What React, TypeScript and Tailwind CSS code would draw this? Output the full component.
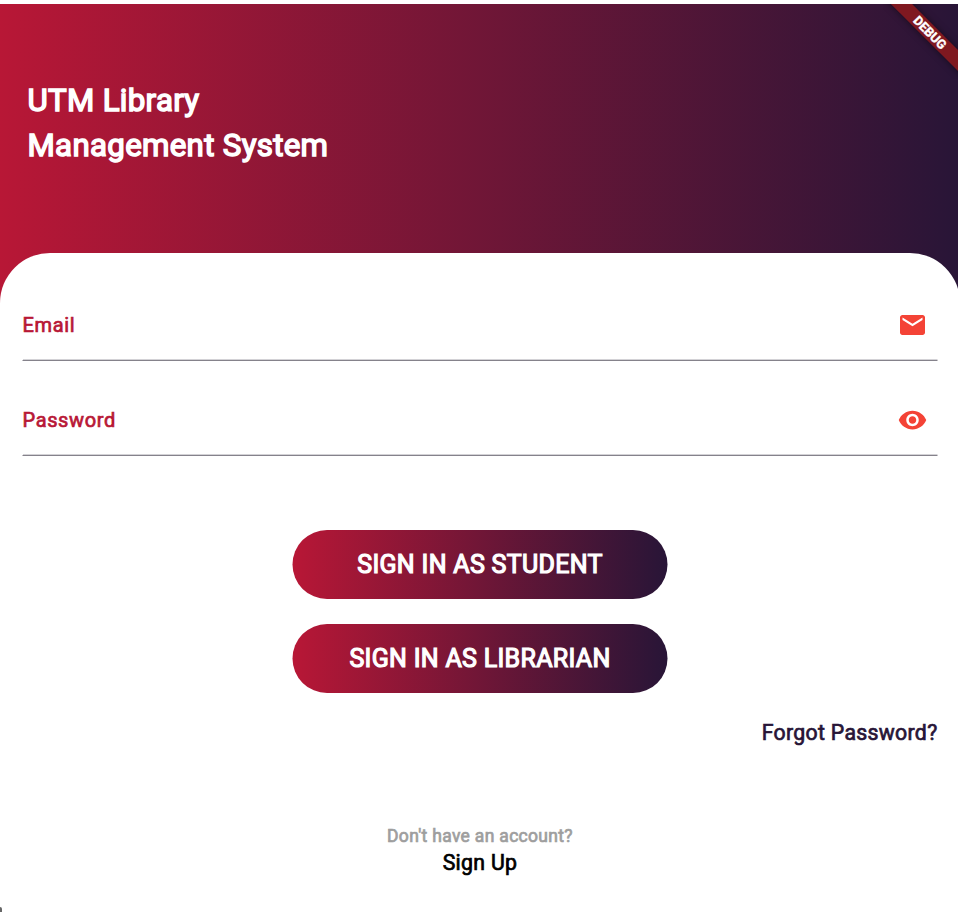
import { MdEmail, MdVisibility } from "react-icons/md";
import type { ReactNode } from "react";

function Field({ label, icon }: { label: string; icon: ReactNode }) {
  return (
    <div className="flex h-[71px] items-center justify-between border-b border-[#85828b] pr-[10px] pl-[0.5px] shadow-[inset_0_-1px_0_#d3d2d6]">
      <label className="text-[20px] leading-6 tracking-[0.63px] text-[#b81736] [-webkit-text-stroke:0.7px_#b81736]">{label}</label>
      <span className="text-[30px] text-[#f44336]">{icon}</span>
    </div>
  );
}

function PillButton({ children }: { children: ReactNode }) {
  return (
    <button className="flex h-[69px] w-[375px] items-center justify-center rounded-full bg-linear-to-r/srgb from-[#b81736] to-[#281537] pt-[1px] pl-[1px] text-[25px] tracking-[0.31px] text-white [-webkit-text-stroke:1.2px_white]">
      {children}
    </button>
  );
}

export default function App() {
  return (
    <div className="relative flex h-[912px] w-[958px] flex-col overflow-hidden bg-white pt-1 font-['Roboto',sans-serif]">
      <div className="flex w-[960px] flex-1 flex-col bg-linear-to-r/srgb from-[#b81736] to-[#281537]">
        <header className="h-[249px] pt-[74px] pl-[27.5px]">
          <h1 className="text-[31.25px] leading-[45px] tracking-[0.31px] text-white [-webkit-text-stroke:1.5px_white]">
            UTM Library
            <br />
            Management System
          </h1>
        </header>
        <main className="flex flex-1 flex-col items-center rounded-t-[50px] bg-white px-[22.5px] pt-[37px]">
          <div className="flex w-full -translate-x-[0.5px] flex-col gap-6">
            <Field label="Email" icon={<MdEmail />} />
            <Field label="Password" icon={<MdVisibility />} />
          </div>
          <div className="mt-[74px] flex -translate-x-[0.5px] flex-col gap-[25px]">
            <PillButton>SIGN IN AS STUDENT</PillButton>
            <PillButton>SIGN IN AS LIBRARIAN</PillButton>
          </div>
          <a className="mt-[27px] self-end text-[21.25px] leading-[25px] tracking-[0.31px] text-[#281537] [-webkit-text-stroke:0.7px_#281537]">Forgot Password?</a>
          <p className="mt-[79px] text-[17.5px] leading-[24px] tracking-[0.31px] text-[#9e9e9e] [-webkit-text-stroke:0.7px_#9e9e9e]">Don't have an account?</p>
          <a className="mt-[2px] text-[21.25px] leading-[26px] tracking-[0.31px] text-black [-webkit-text-stroke:0.7px_black]">Sign Up</a>
        </main>
      </div>
      <div className="absolute top-1 right-0 h-[75px] w-[75px] overflow-hidden">
        <div className="absolute top-[20.75px] -left-[28.25px] flex h-[15px] w-[150px] rotate-45 items-center justify-center bg-[#7f1820] text-[12.75px] font-bold text-white shadow-[0_0_7px_rgba(0,0,0,0.5)] [-webkit-text-stroke:0.4px_white]">
          DEBUG
        </div>
      </div>
      <div className="absolute bottom-0 left-0 h-[5px] w-[2px] rounded-tr-full bg-[#666]" />
    </div>
  );
}
